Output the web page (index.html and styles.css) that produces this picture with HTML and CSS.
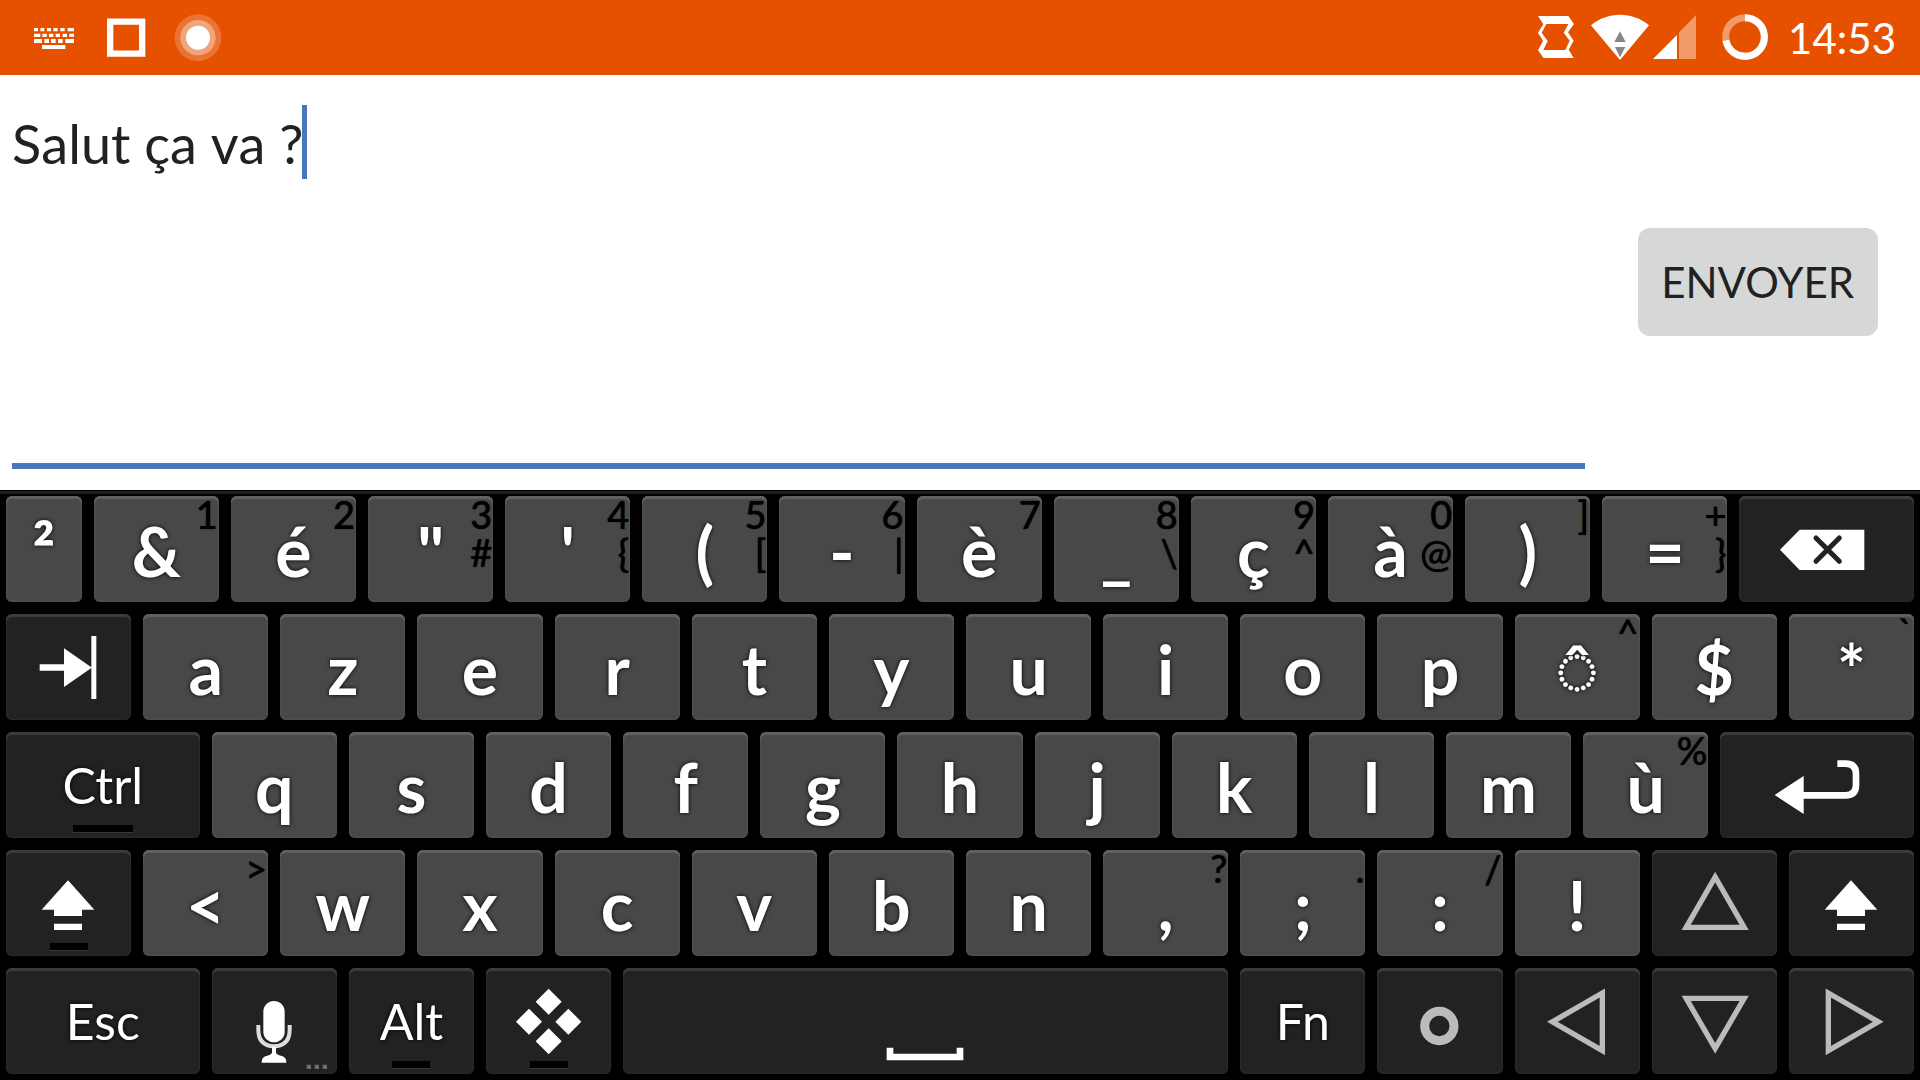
FILE: index.html
```html
<!DOCTYPE html>
<html lang="fr">
<head>
<meta charset="utf-8">
<meta name="viewport" content="width=device-width, initial-scale=1">
<title>Message</title>
<link rel="stylesheet" href="styles.css">
</head>
<body>
<header class="status">
  <div class="status-left">
    <svg class="notif" viewBox="90 0 144 225" fill="#fff" aria-hidden="true"><path d="M102 84h12v10h-12zM121 84h12v10h-12zM141 84h12v10h-12zM160 84h13v10h-13zM181 84h13v10h-13zM203 84h19v10h-19zM102 101h19v10h-19zM127 101h13v10h-13zM147 101h13v10h-13zM167 101h13v10h-13zM188 101h13v10h-13zM208 101h14v10h-14zM102 117h24v12h-24zM133 117h14v12h-14zM153 117h14v12h-14zM174 117h14v12h-14zM196 117h26v12h-26zM126 135h70v12h-70z"/></svg>
    <svg class="notif" viewBox="306 0 144 225" aria-hidden="true"><path d="M330.500 65h96v96h-96z" fill="none" stroke="#fff" stroke-width="19"/></svg>
    <svg class="notif" viewBox="522 0 144 225" fill="#fff" aria-hidden="true"><circle cx="594" cy="113" r="70" fill-opacity=".2"/><circle cx="594" cy="113" r="53" fill-opacity=".35"/><circle cx="594" cy="113" r="36"/></svg>
  </div>
  <div class="status-right">
    <svg class="rotate" viewBox="114 0 108 225" aria-hidden="true"><path fill="#fff" fill-rule="evenodd" d="M114 48h91l17 24-18 25 17 25-15 27 15 25h-90l-17-23 15-28-15-25 16-25zM139 72l-14 26 18 25-13 27h66l13-28-18-24 14-26z"/></svg>
    <svg class="wifi" viewBox="270 0 180 225" aria-hidden="true"><path fill="#fff" d="M273 76c50-42 124-42 174 0l-87 104z"/><path fill="#85868a" d="M360 94l17 32h-34zM345 141h31l-16 31z"/></svg>
    <svg class="signal" viewBox="450 0 144 225" aria-hidden="true"><path fill="#fff" d="M531 105v72h-72z"/><path fill="#f29a68" d="M588 45v132h-51V97z"/></svg>
    <svg class="battery" viewBox="666 0 138 225" fill="none" stroke-width="21" aria-hidden="true"><circle cx="735" cy="111" r="58" stroke="#f29a68"/><path stroke="#fff" d="M735 53a58 58 0 1 1-57 68"/></svg>
    <time class="clock">14:53</time>
  </div>
</header>

<main class="compose">
  <div class="field">
    <textarea class="message" aria-label="Message" spellcheck="false">Salut ça va ?</textarea>
    <span class="caret"></span>
  </div>
  <button class="send" type="button">ENVOYER</button>
</main>

<section class="keyboard" aria-label="Clavier">
  <div class="row row-top">
    <button class="key">²</button>
    <button class="key">&amp;<span class="hints">1</span></button>
    <button class="key">é<span class="hints">2</span></button>
    <button class="key">"<span class="hints">3<br>#</span></button>
    <button class="key">'<span class="hints">4<br>{</span></button>
    <button class="key">(<span class="hints">5<br>[</span></button>
    <button class="key">-<span class="hints">6<br>|</span></button>
    <button class="key">è<span class="hints">7</span></button>
    <button class="key">_<span class="hints">8<br>\</span></button>
    <button class="key">ç<span class="hints">9<br>^</span></button>
    <button class="key">à<span class="hints">0<br>@</span></button>
    <button class="key">)<span class="hints">]</span></button>
    <button class="key">=<span class="hints">+<br>}</span></button>
    <button class="key dark" aria-label="Effacer"><svg class="icon" viewBox="972 48 375 318"><path fill="#fff" d="M1020 209l59-60h194v121h-194z"/><path d="M1128 174l70 70M1198 174l-70 70" stroke="#222" stroke-width="15" stroke-linecap="round"/></svg></button>
  </div>
  <div class="row">
    <button class="key dark" aria-label="Tabulation"><svg class="icon" viewBox="18 491 375 318" fill="#fff"><path d="M119 642h73v-48l82 57V557h15v189h-15v-93l-82 57v-49h-73z"/></svg></button>
    <button class="key">a</button>
    <button class="key">z</button>
    <button class="key">e</button>
    <button class="key">r</button>
    <button class="key">t</button>
    <button class="key">y</button>
    <button class="key">u</button>
    <button class="key">i</button>
    <button class="key">o</button>
    <button class="key">p</button>
    <button class="key">◌<span class="accent">ˆ</span><span class="hints">^</span></button>
    <button class="key">$</button>
    <button class="key">*<span class="hints">`</span></button>
  </div>
  <div class="row">
    <button class="key dark wide lock">Ctrl</button>
    <button class="key">q</button>
    <button class="key">s</button>
    <button class="key">d</button>
    <button class="key">f</button>
    <button class="key">g</button>
    <button class="key">h</button>
    <button class="key">j</button>
    <button class="key">k</button>
    <button class="key">l</button>
    <button class="key">m</button>
    <button class="key">ù<span class="hints">%</span></button>
    <button class="key dark wide" aria-label="Entrée"><svg class="icon" viewBox="943 36 375 318"><path fill="#fff" d="M1002 225l87-57v114z"/><path fill="none" stroke="#fff" stroke-width="20" d="M1086 226h129q31 0 31-31v-33q0-31-31-31h-25"/></svg></button>
  </div>
  <div class="row">
    <button class="key dark lock" aria-label="Majuscule"><svg class="icon" viewBox="18 390 375 318" fill="#fff"><path d="M204 481l79 88h-37v19h-84v-19h-37zM162 611h84v19h-84z"/></svg></button>
    <button class="key">&lt;<span class="hints">&gt;</span></button>
    <button class="key">w</button>
    <button class="key">x</button>
    <button class="key">c</button>
    <button class="key">v</button>
    <button class="key">b</button>
    <button class="key">n</button>
    <button class="key">,<span class="hints">?</span></button>
    <button class="key">;<span class="hints">.</span></button>
    <button class="key">:<span class="hints">/</span></button>
    <button class="key">!</button>
    <button class="key dark" aria-label="Haut"><svg class="icon outline" viewBox="636 390 375 318"><path d="M825.500 471l87 151h-174z"/></svg></button>
    <button class="key dark" aria-label="Majuscule"><svg class="icon" viewBox="18 390 375 318" fill="#fff"><path d="M204 481l79 88h-37v19h-84v-19h-37zM162 611h84v19h-84z"/></svg></button>
  </div>
  <div class="row">
    <button class="key dark wide">Esc</button>
    <button class="key dark" aria-label="Saisie vocale"><svg class="icon" viewBox="636 744 375 318"><rect x="790" y="843" width="64" height="124" rx="32" fill="#fff"/><path fill="none" stroke="#ddd" stroke-width="12" d="M775 915v14q0 48 47 50q47-2 47-50v-14"/><path fill="#fff" d="M816 980h12v18q2 6 20 11q11 4 11 19h-74q0-15 11-19q18-5 20-11z"/><path fill="#6b6b6b" d="M920 1034h13v13h-13zM944 1034h13v13h-13zM968 1034h13v13h-13z"/></svg></button>
    <button class="key dark lock">Alt</button>
    <button class="key dark lock" aria-label="Meta"><svg class="icon" viewBox="-41 744 375 318" fill="#fff"><path d="M147 806l39 39-39 39-39-39zM147 925l39 39-39 39-39-39zM88 866l39 39-39 39-39-39zM206 866l39 39-39 39-39-39z"/></svg></button>
    <button class="key dark space" aria-label="Espace"><svg class="icon" viewBox="1089 744 375 318" fill="#fff"><path d="M1160 983h20v18h190v-18h20v38h-230z"/></svg></button>
    <button class="key dark">Fn</button>
    <button class="key dark" aria-label="Centre"><svg class="icon" viewBox="-189 744 375 318"><circle cx="-2" cy="918" r="44" fill="none" stroke="#bbb" stroke-width="27"/></svg></button>
    <button class="key dark" aria-label="Gauche"><svg class="icon outline" viewBox="225 744 375 318"><path d="M337 905.500l150-86.500v173z"/></svg></button>
    <button class="key dark" aria-label="Bas"><svg class="icon outline" viewBox="636 744 375 318"><path d="M825.500 985l87-150h-174z"/></svg></button>
    <button class="key dark" aria-label="Droite"><svg class="icon outline" viewBox="1047 744 375 318"><path d="M1315 905.500l-150-86.500v173z"/></svg></button>
  </div>
</section>
</body>
</html>
```
FILE: styles.css
```css
* {
  box-sizing: border-box;
}

body {
  display: flex;
  flex-direction: column;
  min-height: 100vh;
  margin: 0;
  background: #fff;
  color: #212121;
  font-family: Lato, sans-serif;
}

button,
textarea {
  border: 0;
  padding: 0;
  font-family: inherit;
  color: inherit;
}

/* Status bar */

.status {
  display: flex;
  justify-content: space-between;
  height: 75px;
  padding: 0 24px 0 30px;
  background: #e65100;
  color: #fff;
}

.status svg {
  height: 75px;
}

.status-left {
  display: flex;
  gap: 24px;
}

.notif {
  width: 48px;
}

.status-right {
  display: flex;
}

.rotate {
  width: 36px;
  margin-right: 16px;
}

.wifi {
  width: 60px;
}

.signal {
  width: 48px;
  margin-right: 24px;
}

.battery {
  width: 46px;
  margin-right: 20px;
}

.clock {
  font-size: 42px;
  line-height: 76px;
}

/* Message area */

.compose {
  display: flex;
  flex: 1;
  align-items: center;
  gap: 53px;
  padding: 0 42px 2px 12px;
}

.field {
  position: relative;
  display: flex;
  flex: 1;
  align-self: stretch;
  margin-bottom: 19px;
}

.message {
  width: 100%;
  padding-top: 32px;
  border-bottom: 6px solid #4876bf;
  outline: 0;
  background: transparent;
  font-size: 54px;
  font-kerning: none;
  line-height: 74px;
  resize: none;
  caret-color: transparent;
}

.caret {
  position: absolute;
  top: 30px;
  left: 290px;
  width: 5px;
  height: 74px;
  background: #4876bf;
}

.send {
  padding: 1px 24px 0 23px;
  border-radius: 12px;
  background: #d6d8d7;
  font-size: 42px;
  line-height: 107px;
}

/* Keyboard */

.keyboard {
  display: grid;
  gap: 12px;
  padding: 6px 0;
  background: #000;
  box-shadow: inset 0 1px #000, inset 0 4px #1e1e1e;
}

.row {
  display: grid;
  grid-template-columns: repeat(28, minmax(0, 1fr));
}

.row-top {
  grid-template-columns: 640fr repeat(12, 1000fr) 1360fr;
}

.key {
  position: relative;
  display: flex;
  grid-column: span 2;
  align-items: center;
  justify-content: center;
  min-width: 0;
  height: 106px;
  margin: 0 6px;
  padding-top: 4px;
  border-radius: 6px;
  background: #484848;
  box-shadow: inset 0 3px 1px #606060, inset 0 0 2px 1px #505050;
  color: #fff;
  font-size: 68px;
  font-weight: 700;
  line-height: 102px;
  text-shadow: 0 0 4px #000;
}

.row-top .key {
  grid-column: auto;
}

.key.dark {
  padding-top: 0;
  background: #222;
  box-shadow: inset 0 3px 1px #3c3c3c, inset 0 0 2px 1px #2a2a2a;
  font-size: 50px;
  font-weight: 400;
  line-height: 106px;
}

.key.wide {
  grid-column: span 3;
}

.key.space {
  grid-column: span 9;
}

/* Dead-key accent, laid over the dotted circle */
.accent {
  position: absolute;
  inset: 4px 0 0;
  text-align: center;
}

.hints {
  position: absolute;
  top: -1px;
  right: 1px;
  color: #000;
  font-size: 38px;
  font-weight: 500;
  line-height: 38px;
  text-align: right;
  text-shadow: 0 0 1px #000;
}

/* Bar under the modifier keys that can be locked */
.lock::after {
  content: "";
  position: absolute;
  right: 0;
  bottom: 6px;
  left: 0;
  width: 38px;
  height: 7px;
  margin: 0 auto;
  background: #000;
  box-shadow: 0 1px #383838;
}

.lock.wide::after {
  width: 60px;
}

.icon {
  flex: none;
  width: 125px;
  height: 106px;
}

.outline {
  fill: none;
  stroke: #bbb;
  stroke-width: 16px;
}
```
